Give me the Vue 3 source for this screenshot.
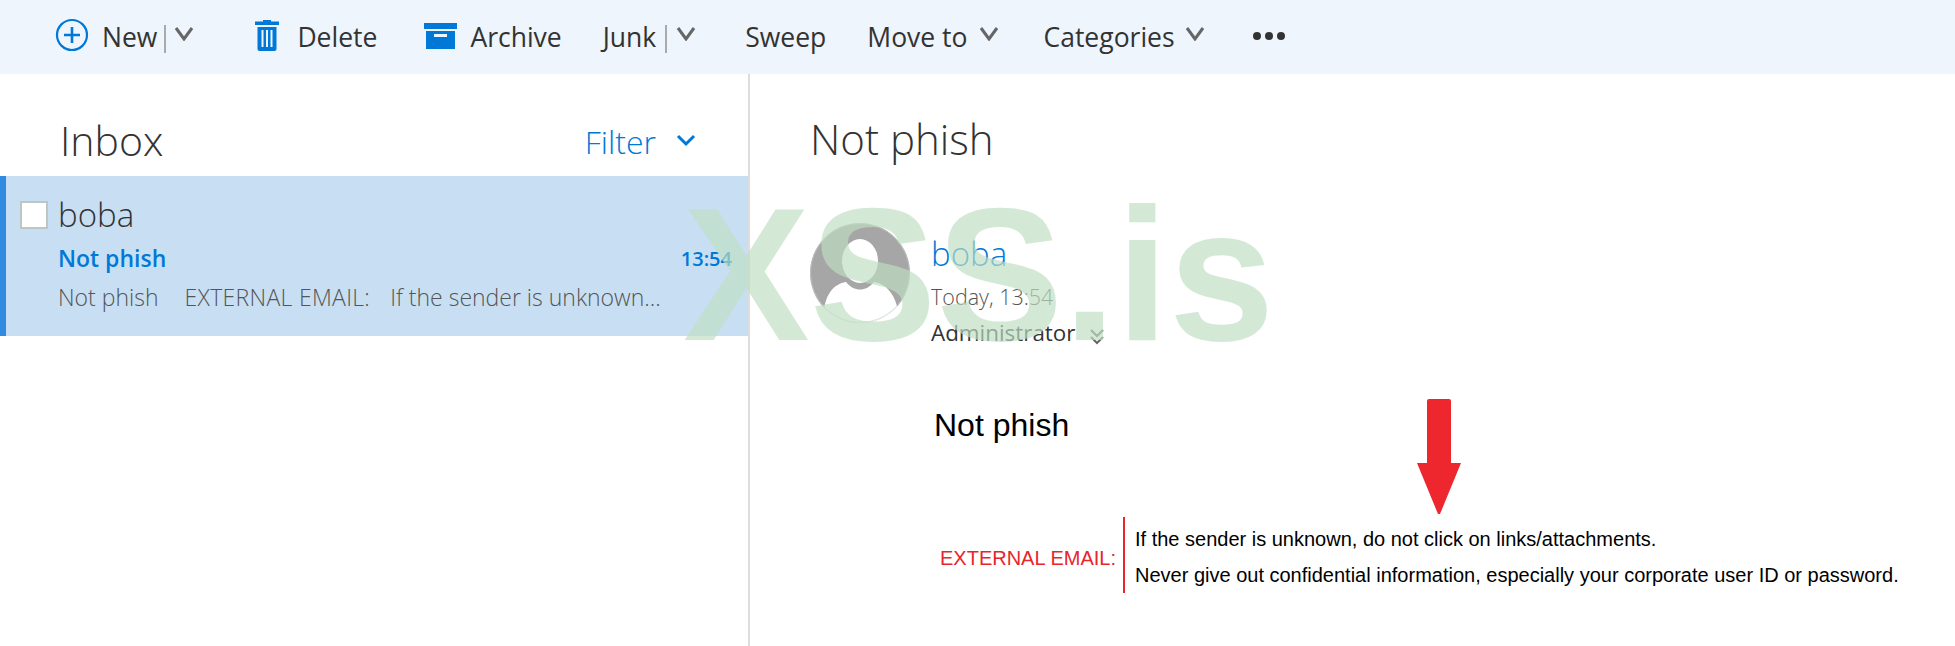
<template>
  <div class="page">
    <div class="toolbar">
      <div class="tool new">
        <svg class="ico" width="34" height="34" viewBox="0 0 34 34">
          <circle cx="17" cy="17" r="15" fill="none" stroke="#0078d7" stroke-width="2.2" />
          <path d="M17 9v16M9 17h16" stroke="#0078d7" stroke-width="2.6" fill="none" />
        </svg>
        <span>New</span>
        <i class="sep"></i>
        <svg class="chev" width="20" height="14" viewBox="0 0 20 14"><path d="M2 1l8 11 8-11" /></svg>
      </div>
      <div class="tool del">
        <svg class="ico" width="26" height="32" viewBox="0 0 26 32">
          <path d="M9 2.500V1h8v1.500h8V6H1V2.500z" fill="#0078d7" />
          <path fill-rule="evenodd" d="M3.500 8h19v22a2 2 0 0 1-2 2h-15a2 2 0 0 1-2-2zM7.500 11v17h2V11zM12 11v17h2V11zM16.500 11v17h2V11z" fill="#0078d7" />
        </svg>
        <span>Delete</span>
      </div>
      <div class="tool arch">
        <svg class="ico" width="33" height="26" viewBox="0 0 33 26">
          <rect x="0" y="0" width="33" height="6" fill="#0078d7" />
          <path fill-rule="evenodd" d="M2 8h29v18H2zM10 11v3h13v-3z" fill="#0078d7" />
        </svg>
        <span>Archive</span>
      </div>
      <div class="tool junk">
        <span>Junk</span>
        <i class="sep"></i>
        <svg class="chev" width="20" height="14" viewBox="0 0 20 14"><path d="M2 1l8 11 8-11" /></svg>
      </div>
      <div class="tool sweep"><span>Sweep</span></div>
      <div class="tool move">
        <span>Move to</span>
        <svg class="chev" width="20" height="14" viewBox="0 0 20 14"><path d="M2 1l8 11 8-11" /></svg>
      </div>
      <div class="tool cats">
        <span>Categories</span>
        <svg class="chev" width="20" height="14" viewBox="0 0 20 14"><path d="M2 1l8 11 8-11" /></svg>
      </div>
      <div class="dots"><i></i><i></i><i></i></div>
    </div>

    <div class="main">
      <section class="list">
        <div class="list-head">
          <h1>Inbox</h1>
          <div class="filter">
            <span>Filter</span>
            <svg width="20" height="14" viewBox="0 0 20 14"><path d="M2 2l8 8 8-8" /></svg>
          </div>
        </div>
        <div class="row">
          <div class="row-top">
            <span class="check"></span>
            <span class="sender">boba</span>
          </div>
          <div class="row-subject">
            <span>Not phish</span>
            <span class="time">13:54</span>
          </div>
          <div class="row-preview">
            <span>Not phish</span>
            <span class="preview-ext">EXTERNAL EMAIL:</span>
            <span>If the sender is unknown...</span>
          </div>
        </div>
      </section>

      <section class="reader">
        <h2>Not phish</h2>
        <div class="from">
          <svg class="avatar" width="100" height="100" viewBox="0 0 100 100">
            <defs>
              <clipPath id="disc"><circle cx="50" cy="50" r="50" /></clipPath>
            </defs>
            <circle cx="50" cy="50" r="50" fill="#a6a6a6" />
            <ellipse cx="50" cy="38" rx="18" ry="22" fill="#fff" />
            <path clip-path="url(#disc)" d="M14 100C12 75 22 61 36 59C44 69 56 69 64 59C78 61 89 75 89 100z" fill="#fff" />
            <circle cx="50" cy="50" r="49.500" fill="none" stroke="#c8d0d0" stroke-width="0.600" />
          </svg>
          <div class="who">
            <div class="who-name">boba</div>
            <div class="who-date">Today, 13:54</div>
            <div class="who-to">
              <span>Administrator</span>
              <svg width="14" height="18" viewBox="0 0 14 18"><path d="M1 2l6 6 6-6M1 9l6 6 6-6" /></svg>
            </div>
          </div>
        </div>
        <div class="body">
          <p class="subject">Not phish</p>
          <div class="banner">
            <div class="ext">EXTERNAL EMAIL:</div>
            <div class="lines">
              <p>If the sender is unknown, do not click on links/attachments.</p>
              <p>Never give out confidential information, especially your corporate user ID or password.</p>
            </div>
          </div>
        </div>
      </section>
    </div>

    <!-- overlays: red arrow and the forum watermark pasted on the screenshot -->
    <svg class="arrow" width="44" height="115" viewBox="0 0 44 115">
      <path d="M10 2a2 2 0 0 1 2-2h20a2 2 0 0 1 2 2v62h10L23 115h-2L0 64h10z" fill="#ee262d" />
    </svg>
    <div class="mark">XSS.is</div>
  </div>
</template>

<script setup>
</script>

<style>
html,
body {
  margin: 0;
  background: #fff;
}
</style>

<style scoped>
.page {
  position: relative;
  width: 1955px;
  height: 646px;
  overflow: hidden;
  font-family: "Open Sans", "Noto Sans", sans-serif;
  color: #333;
}

.toolbar {
  display: flex;
  align-items: center;
  height: 74px;
  background: #eef5fc;
  font-size: 26.500px;
  padding-left: 55px;
}

.tool {
  display: flex;
  align-items: center;
  white-space: nowrap;
}

.ico {
  flex: none;
}

.sep {
  width: 2px;
  height: 28px;
  background: #aaa;
  margin: 3px 8px 0 7px;
}

.chev {
  fill: none;
  stroke: #666;
  stroke-width: 3;
  margin-top: -6px;
}

.new .ico {
  margin-right: 13px;
  margin-top: -5px;
}

.del {
  margin-left: 60px;
}

.del .ico {
  margin-right: 17px;
  margin-top: -4px;
}

.arch {
  margin-left: 47px;
}

.arch .ico {
  margin-right: 13px;
  margin-top: -3px;
}

.junk {
  margin-left: 41px;
}

.junk .sep {
  margin: 3px 9px 0 9px;
}

.sweep {
  margin-left: 49px;
}

.move {
  margin-left: 41px;
}

.move .chev {
  margin-left: 11px;
}

.cats .chev {
  margin-left: 10px;
}

.cats {
  margin-left: 45px;
}

.dots {
  display: flex;
  gap: 4px;
  margin-left: 48px;
  margin-top: -3px;
}

.dots i {
  width: 8px;
  height: 8px;
  border-radius: 50%;
  background: #333;
}

.main {
  display: flex;
  height: 572px;
}

.list {
  width: 750px;
  box-sizing: border-box;
  flex: none;
  border-right: 2px solid #ddd;
}

.list-head {
  display: flex;
  justify-content: space-between;
  align-items: center;
  height: 102px;
  box-sizing: border-box;
  padding: 30px 52px 0 60px;
}

h1 {
  margin: 0;
  font-size: 41px;
  font-weight: 300;
  color: #333;
}

.filter {
  display: flex;
  align-items: center;
  gap: 20px;
  font-size: 32px;
  font-weight: 300;
  color: #0078d7;
  margin-top: 2px;
}

.filter svg {
  fill: none;
  stroke: #0078d7;
  stroke-width: 3;
}

.row {
  height: 160px;
  box-sizing: border-box;
  background: #c8dff3;
  border-left: 6px solid #2f8ae0;
  padding: 15px 16px 0 14px;
}

.row-top {
  display: flex;
  align-items: center;
  gap: 10px;
  height: 46px;
}

.check {
  width: 28px;
  height: 28px;
  box-sizing: border-box;
  background: #fff;
  border: 2px solid #bcc7c4;
  margin-top: 2px;
}

.sender {
  font-size: 33px;
  font-weight: 300;
  color: #333;
}

.row-subject {
  display: flex;
  justify-content: space-between;
  align-items: center;
  padding-left: 38px;
  margin-top: 5px;
  font-weight: 600;
  font-size: 23px;
  color: #0078d7;
}

.time {
  font-size: 20px;
}

.row-preview {
  display: flex;
  padding-left: 38px;
  margin-top: 7px;
  font-size: 23px;
  font-weight: 300;
  color: #555;
  white-space: nowrap;
}

.preview-ext {
  letter-spacing: 0.300px;
  margin: 0 20px 0 26px;
}

.reader {
  flex: 1;
  padding-left: 60px;
}

h2 {
  margin: 0;
  padding-top: 36px;
  font-size: 42px;
  font-weight: 300;
  color: #333;
}

.from {
  display: flex;
  gap: 21px;
  margin-top: 56px;
}

.avatar {
  flex: none;
}

.who-name {
  font-size: 33px;
  font-weight: 300;
  color: #0078d7;
  line-height: 36px;
  margin-top: 13px;
}

.who-date {
  font-size: 21.500px;
  font-weight: 300;
  color: #555;
  line-height: 30px;
  margin-top: 10px;
}

.who-to {
  display: flex;
  align-items: center;
  gap: 15px;
  font-size: 22.400px;
  color: #333;
  line-height: 30px;
  margin-top: 6px;
}

.who-to svg {
  fill: none;
  stroke: #666;
  stroke-width: 2;
  margin-top: 7px;
}

.body {
  padding-left: 124px;
  font-family: "Liberation Sans", Arial, sans-serif;
  color: #000;
}

.subject {
  margin: 0;
  padding-top: 59px;
  font-size: 32px;
}

.banner {
  display: flex;
  align-items: center;
  margin-top: 73px;
}

.ext {
  font-size: 20px;
  color: #e8252b;
  padding: 7px 0 0 6px;
  margin-right: 7px;
}

.lines {
  border-left: 2px solid #e8252b;
  padding: 4px 0 0 10px;
  font-size: 20px;
}

.lines p {
  margin: 0;
  line-height: 36px;
}

.arrow {
  position: absolute;
  left: 1417px;
  top: 399px;
}

.mark {
  position: absolute;
  left: 683px;
  top: 165px;
  font-family: "Liberation Sans", Arial, sans-serif;
  font-weight: 700;
  font-size: 190px;
  line-height: 218px;
  color: rgba(190, 222, 195, 0.68);
  pointer-events: none;
}
</style>
